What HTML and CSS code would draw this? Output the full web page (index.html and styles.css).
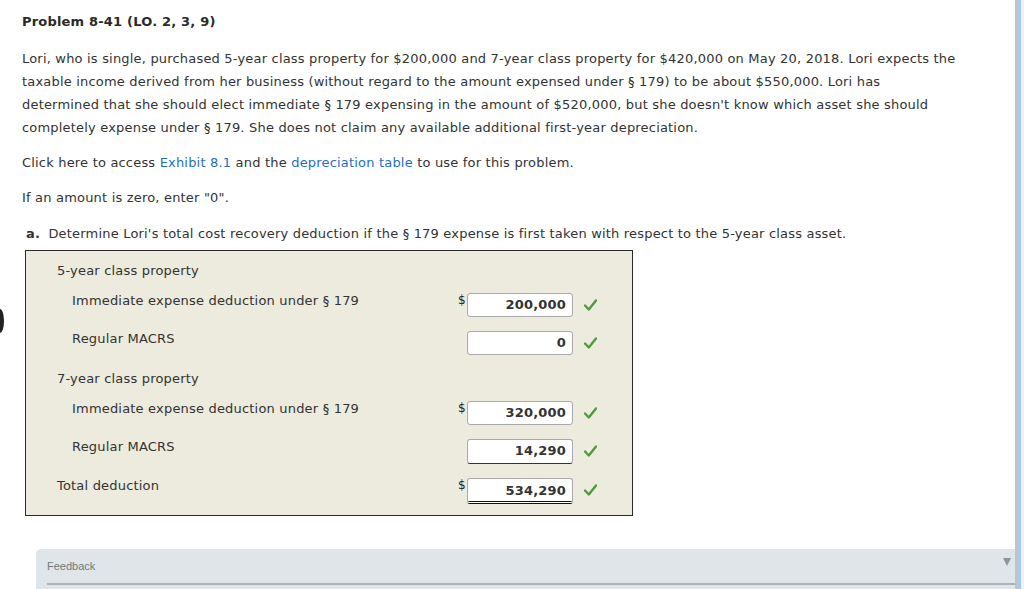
FILE: index.html
```html
<!DOCTYPE html>
<html>
<head>
<meta charset="utf-8">
<link rel="stylesheet" href="styles.css">
</head>
<body>
<div class="page">
  <main class="main">
    <span class="edge-mark"></span>
    <h1 class="title">Problem 8-41 (LO. 2, 3, 9)</h1>
    <p class="para">Lori, who is single, purchased 5-year class property for $200,000 and 7-year class property for $420,000 on May 20, 2018. Lori expects the taxable income derived from her business (without regard to the amount expensed under § 179) to be about $550,000. Lori has determined that she should elect immediate § 179 expensing in the amount of $520,000, but she doesn't know which asset she should completely expense under § 179. She does not claim any available additional first-year depreciation.</p>
    <p class="para">Click here to access <a class="link">Exhibit 8.1</a> and the <a class="link">depreciation table</a> to use for this problem.</p>
    <p class="para">If an amount is zero, enter "0".</p>
    <p class="para question"><b class="qlabel">a.</b> Determine Lori's total cost recovery deduction if the § 179 expense is first taken with respect to the 5-year class asset.</p>

    <div class="answer-box">
      <div class="heading">5-year class property</div>
      <div class="row indent">
        <span class="label">Immediate expense deduction under § 179</span>
        <span class="dollar">$</span>
        <span class="input">200,000</span>
        <span class="check"><svg width="13" height="12" viewBox="0 0 13 12"><path d="M1 6.5 L4.8 10.5 L12 1.5" fill="none" stroke="#4a9d3a" stroke-width="2.4" stroke-linecap="round" stroke-linejoin="round"/></svg></span>
      </div>
      <div class="row indent">
        <span class="label">Regular MACRS</span>
        <span class="dollar"></span>
        <span class="input">0</span>
        <span class="check"><svg width="13" height="12" viewBox="0 0 13 12"><path d="M1 6.5 L4.8 10.5 L12 1.5" fill="none" stroke="#4a9d3a" stroke-width="2.4" stroke-linecap="round" stroke-linejoin="round"/></svg></span>
      </div>
      <div class="heading heading-second">7-year class property</div>
      <div class="row indent">
        <span class="label">Immediate expense deduction under § 179</span>
        <span class="dollar">$</span>
        <span class="input">320,000</span>
        <span class="check"><svg width="13" height="12" viewBox="0 0 13 12"><path d="M1 6.5 L4.8 10.5 L12 1.5" fill="none" stroke="#4a9d3a" stroke-width="2.4" stroke-linecap="round" stroke-linejoin="round"/></svg></span>
      </div>
      <div class="row indent">
        <span class="label">Regular MACRS</span>
        <span class="dollar"></span>
        <span class="input underline">14,290</span>
        <span class="check"><svg width="13" height="12" viewBox="0 0 13 12"><path d="M1 6.5 L4.8 10.5 L12 1.5" fill="none" stroke="#4a9d3a" stroke-width="2.4" stroke-linecap="round" stroke-linejoin="round"/></svg></span>
      </div>
      <div class="row total">
        <span class="label">Total deduction</span>
        <span class="dollar">$</span>
        <span class="input double">534,290</span>
        <span class="check"><svg width="13" height="12" viewBox="0 0 13 12"><path d="M1 6.5 L4.8 10.5 L12 1.5" fill="none" stroke="#4a9d3a" stroke-width="2.4" stroke-linecap="round" stroke-linejoin="round"/></svg></span>
      </div>
    </div>

    <div class="feedback">
      <div class="feedback-head">
        <span class="feedback-title">Feedback</span>
        <span class="caret"></span>
      </div>
    </div>
  </main>
  <div class="scrollbar"><span class="thumb"></span></div>
</div>
</body>
</html>
```
FILE: styles.css
```css
html, body {
  margin: 0;
  padding: 0;
  background: #fff;
}
body {
  font-family: "DejaVu Sans", Verdana, sans-serif;
  font-size: 13px;
  letter-spacing: 0.19px;
  color: #333;
  overflow: hidden;
}
.page {
  display: flex;
  height: 589px;
}
.main {
  flex: 1;
  position: relative;
  padding: 10px 0 0 22px;
  min-width: 0;
}
.edge-mark {
  position: absolute;
  left: -4px;
  top: 309px;
  width: 8px;
  height: 24px;
  border-radius: 50%;
  background: #222;
}
.title {
  margin: 0;
  font-size: 13px;
  line-height: 23px;
  font-weight: bold;
  color: #2a2a2a;
}
.para {
  margin: 12px 0 0 0;
  line-height: 23px;
  width: 936px;
}
.title + .para {
  margin-top: 14px;
}
.link {
  color: #1f6fc0;
  text-decoration: none;
}
.question {
  margin-top: 13px;
  padding-left: 4px;
}
.qlabel {
  margin-right: 4px;
}
.answer-box {
  box-sizing: border-box;
  margin: 5px 0 0 3px;
  width: 608px;
  border: 1px solid #2b2b2b;
  background: #ecebdd;
  padding: 12px 0 11px 31px;
  display: flex;
  flex-direction: column;
  gap: 14px;
}
.heading {
  line-height: 16px;
}
.heading-second {
  margin-top: 2px;
}
.row {
  display: grid;
  grid-template-columns: 386px 9px 106px 24px;
  align-items: start;
  column-gap: 0;
}
.row.indent {
  padding-left: 15px;
}
.row.total {
  grid-template-columns: 401px 9px 106px 24px;
}
.label {
  line-height: 16px;
}
.dollar {
  font-size: 12px;
  line-height: 12px;
  padding-top: 1px;
  color: #222;
  letter-spacing: 0;
}
.input {
  box-sizing: border-box;
  height: 24px;
  background: #fff;
  border: 1px solid #a9a9a9;
  border-radius: 3px;
  text-align: right;
  font-weight: bold;
  line-height: 22px;
  padding: 0 6px 0 4px;
  color: #333;
}
.input.underline {
  border-bottom: 1px solid #333;
  height: 25px;
}
.input.double {
  border-bottom: 3px double #111;
  height: 26px;
  line-height: 23px;
}
.check {
  padding: 6px 0 0 11px;
  line-height: 0;
}
.feedback {
  margin: 33px 0 0 14px;
  background: #dfe5e8;
  border-radius: 5px 0 0 0;
  padding: 0 0 0 11px;
  height: 40px;
}
.feedback-head {
  display: flex;
  align-items: center;
  justify-content: space-between;
  height: 34px;
  border-bottom: 2px solid #aab3b6;
}
.feedback-title {
  font-family: "Liberation Sans", Arial, sans-serif;
  font-size: 11px;
  letter-spacing: 0;
  color: #6e7b7c;
  padding-bottom: 1px;
}
.caret {
  width: 0;
  height: 0;
  border-left: 4px solid transparent;
  border-right: 4px solid transparent;
  border-top: 8px solid #8c969a;
  margin: 0 4px 8px 0;
}
.scrollbar {
  width: 9px;
  flex: none;
  box-sizing: border-box;
  border-left: 2px solid #c3c3c3;
  background: #f1f1f1;
  display: flex;
}
.thumb {
  width: 4px;
  background: #a7c8f1;
}
```
